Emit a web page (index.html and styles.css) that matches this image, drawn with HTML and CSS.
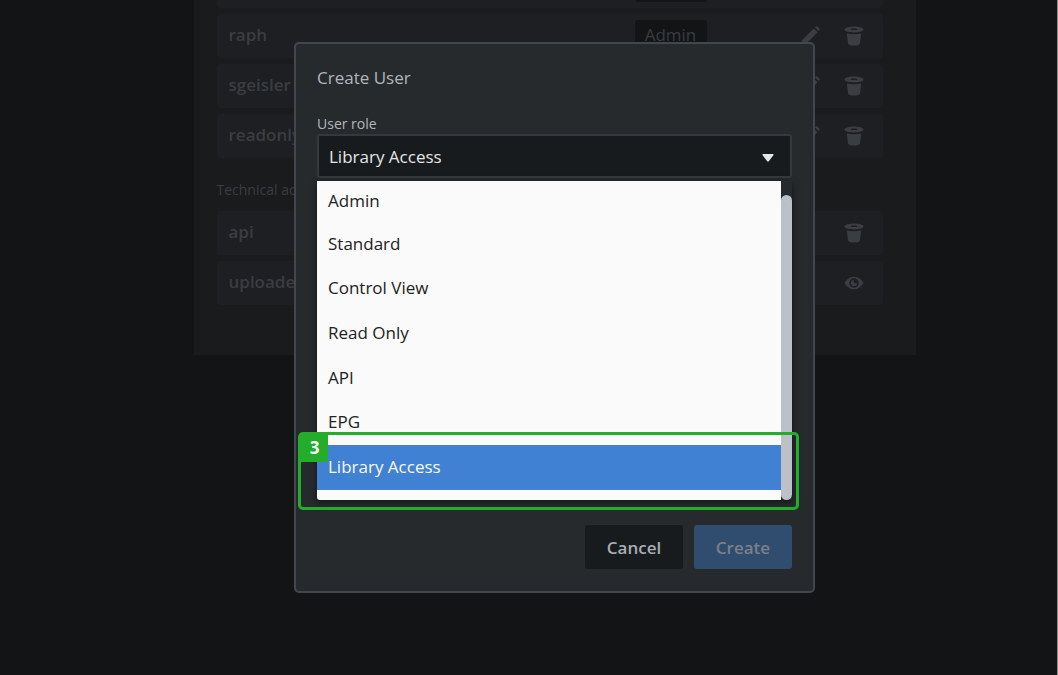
FILE: index.html
```html
<!DOCTYPE html>
<html lang="en">
<head>
    <meta charset="UTF-8">
    <meta name="viewport" content="width=device-width, initial-scale=1.0">
    <title>User Management</title>
    <link rel="stylesheet" href="styles.css">
</head>
<body>
    <!-- shared icons -->
    <svg class="sprite" aria-hidden="true">
        <symbol id="icon-trash" viewBox="0 0 20 20">
            <path fill-rule="evenodd" d="M10 0.500C14.500 0.500 19.500 1.500 19.500 3.600C19.500 5.600 14.500 6.500 10 6.500S0.500 5.600 0.500 3.600C0.500 1.500 5.500 0.500 10 0.500ZM10 2.400C8 2.400 6.500 2.700 6.500 3.200S8 4.100 10 4.100S13.500 3.700 13.500 3.200S12 2.400 10 2.400Z"/>
            <path d="M2.800 7.400C7 8.400 13 8.400 17.200 7.400L16 17.200C15.700 20.300 4.300 20.300 4 17.200Z"/>
        </symbol>
        <symbol id="icon-pencil" viewBox="0 0 20 20">
            <path d="M14.800 1.300L16 0.400C17 -0.200 20.200 2.500 19.700 3.800L18.800 5.200ZM13.700 2.500L17.600 6.300L6.500 17.600L0.500 19.600L2.400 13.800Z"/>
        </symbol>
        <symbol id="icon-eye" viewBox="0 0 22 16">
            <path fill-rule="evenodd" d="M0.500 8C3 4 6.500 1 11 1S19 4 21.500 8C19 12 15.500 15 11 15S3 12 0.500 8ZM11 2.800A5.200 5.200 0 1 0 11 13.200A5.200 5.200 0 1 0 11 2.800Z"/>
            <path d="M11 4.600A3.400 3.400 0 1 0 14.400 8C13 9 11 8.500 10.700 7C10.600 6.200 10.800 5.200 11 4.600Z"/>
        </symbol>
    </svg>

    <main class="users">
        <ul class="user-list">
            <li class="user">
                <span class="role"></span>
            </li>
            <li class="user">
                <span class="name">raph</span>
                <span class="role">Admin</span>
                <button class="icon-btn" aria-label="Edit raph"><svg><use href="#icon-pencil"/></svg></button>
                <button class="icon-btn" aria-label="Delete raph"><svg><use href="#icon-trash"/></svg></button>
            </li>
            <li class="user">
                <span class="name">sgeisler</span>
                <button class="icon-btn" aria-label="Edit sgeisler"><svg><use href="#icon-pencil"/></svg></button>
                <button class="icon-btn" aria-label="Delete sgeisler"><svg><use href="#icon-trash"/></svg></button>
            </li>
            <li class="user">
                <span class="name">readonly</span>
                <button class="icon-btn" aria-label="Edit readonly"><svg><use href="#icon-pencil"/></svg></button>
                <button class="icon-btn" aria-label="Delete readonly"><svg><use href="#icon-trash"/></svg></button>
            </li>
        </ul>
        <h2>Technical accounts</h2>
        <ul class="user-list">
            <li class="user">
                <span class="name">api</span>
                <button class="icon-btn" aria-label="Delete api"><svg><use href="#icon-trash"/></svg></button>
            </li>
            <li class="user">
                <span class="name">uploader</span>
                <button class="icon-btn" aria-label="Show uploader"><svg><use href="#icon-eye"/></svg></button>
            </li>
        </ul>
    </main>

    <div class="overlay">
        <form class="modal" role="dialog" aria-labelledby="modal-title">
            <h1 id="modal-title">Create User</h1>
            <label for="role">User role</label>
            <div class="dropdown">
                <select id="role">
                    <option>Library Access</option>
                </select>
                <svg class="caret" viewBox="0 0 12 8"><path d="M1 0H11Q12 0 11.500 1L7 7Q6 8 5 7L0.500 1Q0 0 1 0Z"/></svg>
                <div class="menu">
                    <ul role="listbox" aria-label="User role">
                        <li role="option">Admin</li>
                        <li role="option">Standard</li>
                        <li role="option">Control View</li>
                        <li role="option">Read Only</li>
                        <li role="option">API</li>
                        <li role="option">EPG</li>
                        <li role="option" class="selected" aria-selected="true">Library Access</li>
                    </ul>
                    <div class="scrollbar"></div>
                </div>
            </div>
            <div class="actions">
                <button type="button" class="btn">Cancel</button>
                <button type="submit" class="btn primary" disabled>Create</button>
            </div>
            <!-- step marker -->
            <div class="marker"><span>3</span></div>
        </form>
    </div>
</body>
</html>
```
FILE: styles.css
```css
:root {
    --bg: #121416;
    --panel: #191b1d;
    --row: #1d1f22;
    --muted: #3a3d41;
    --modal: #262a2d;
    --field: #171b1e;
    --border: #42474d;
    --blue: #4081d3;
    --green: #23ad2a;
}

* {
    box-sizing: border-box;
    margin: 0;
    padding: 0;
}

body {
    min-height: 100vh;
    padding-left: 52px;
    overflow: hidden;
    background: var(--bg);
    border-right: 1px solid #8c8c8c;
    font-family: "Open Sans", "Noto Sans", sans-serif;
    font-size: 17px;
}

ul {
    list-style: none;
}

.sprite {
    display: none;
}

/* User list behind the dialog */
.users {
    width: 72%;
    max-width: 722px;
    height: 355px;
    margin: 0 auto;
    padding: 0 33px 50px 23px;
    display: flex;
    flex-direction: column;
    justify-content: flex-end;
    background: var(--panel);
    color: var(--muted);
}

.user-list {
    display: flex;
    flex-direction: column;
    gap: 6px;
}

.user {
    flex: none;
    display: flex;
    align-items: center;
    height: 44px;
    padding: 0 18px 0 12px;
    background: var(--row);
    border-radius: 3px;
}

.name {
    flex: 1;
    padding-bottom: 3px;
    font-weight: 600;
}

.role {
    width: 72px;
    height: 32px;
    margin-right: 92px;
    line-height: 30px;
    text-align: center;
    background: var(--bg);
    border-radius: 3px;
}

.role:first-child {
    margin-left: auto;
    margin-right: 158px;
}

.users h2 {
    padding: 20px 0 9px;
    font-size: 14px;
    font-weight: 400;
    line-height: 24px;
}

.icon-btn {
    width: 22px;
    height: 22px;
    margin-left: 22px;
    background: none;
    border: none;
    color: var(--muted);
}

.role + .icon-btn {
    margin-left: 0;
}

.icon-btn svg {
    display: block;
    width: 20px;
    height: 20px;
    margin: auto;
    fill: currentColor;
}

/* Dialog */
.overlay {
    position: fixed;
    inset: 0;
    padding: 42px 1px 0 52px;
}

.modal {
    position: relative;
    width: 90%;
    max-width: 521px;
    margin: 0 auto;
    padding: 22px 21px;
    background: var(--modal);
    border: 2px solid var(--border);
    border-radius: 5px;
    color: #b2b6bc;
}

.modal h1 {
    margin-bottom: 24px;
    font-size: 17px;
    font-weight: 400;
    line-height: 24px;
}

.modal label {
    display: block;
    font-size: 14px;
    line-height: 20px;
}

.dropdown {
    position: relative;
    margin-bottom: 347px;
}

.dropdown select {
    display: block;
    width: 100%;
    height: 44px;
    padding: 0 10px;
    appearance: none;
    background: var(--field);
    border: 2px solid #35393d;
    border-radius: 3px;
    color: #e6e6e6;
    font: inherit;
}

.caret {
    position: absolute;
    top: 20px;
    right: 18px;
    width: 12px;
    height: 8px;
    fill: #e6e6e6;
}

.menu {
    position: absolute;
    top: 47px;
    left: 0;
    right: 0;
    display: flex;
    height: 319px;
    box-shadow: 0 2px 6px rgba(0, 0, 0, 0.5);
}

.menu ul {
    flex: 1;
    display: grid;
    grid-template-rows: 41px;
    grid-auto-rows: 1fr;
    padding-bottom: 10px;
    background: #fafafa;
    color: #222;
    border-radius: 0 0 0 3px;
}

.menu li {
    display: flex;
    align-items: center;
    padding: 0 11px 2px;
}

.menu .selected {
    background: var(--blue);
    color: #fafafa;
}

.scrollbar {
    width: 11px;
    margin-top: 14px;
    background: #bcc0c8;
    border-radius: 6px;
}

.actions {
    display: flex;
    justify-content: flex-end;
    gap: 11px;
}

.btn {
    width: 98px;
    height: 44px;
    background: var(--field);
    border: none;
    border-radius: 3px;
    color: #a9adb3;
    font: inherit;
    font-weight: 600;
}

.btn.primary {
    background: #304d70;
    color: #7b8087;
}

/* Numbered step marker */
.marker {
    position: absolute;
    left: 2px;
    right: 14px;
    bottom: 81px;
    height: 78px;
    border: 3px solid var(--green);
    border-radius: 5px;
}

.marker span {
    display: block;
    width: 27px;
    height: 27px;
    background: var(--green);
    border-radius: 0 0 3px 0;
    color: #fff;
    font-weight: 700;
    line-height: 26px;
    text-align: center;
}
```
